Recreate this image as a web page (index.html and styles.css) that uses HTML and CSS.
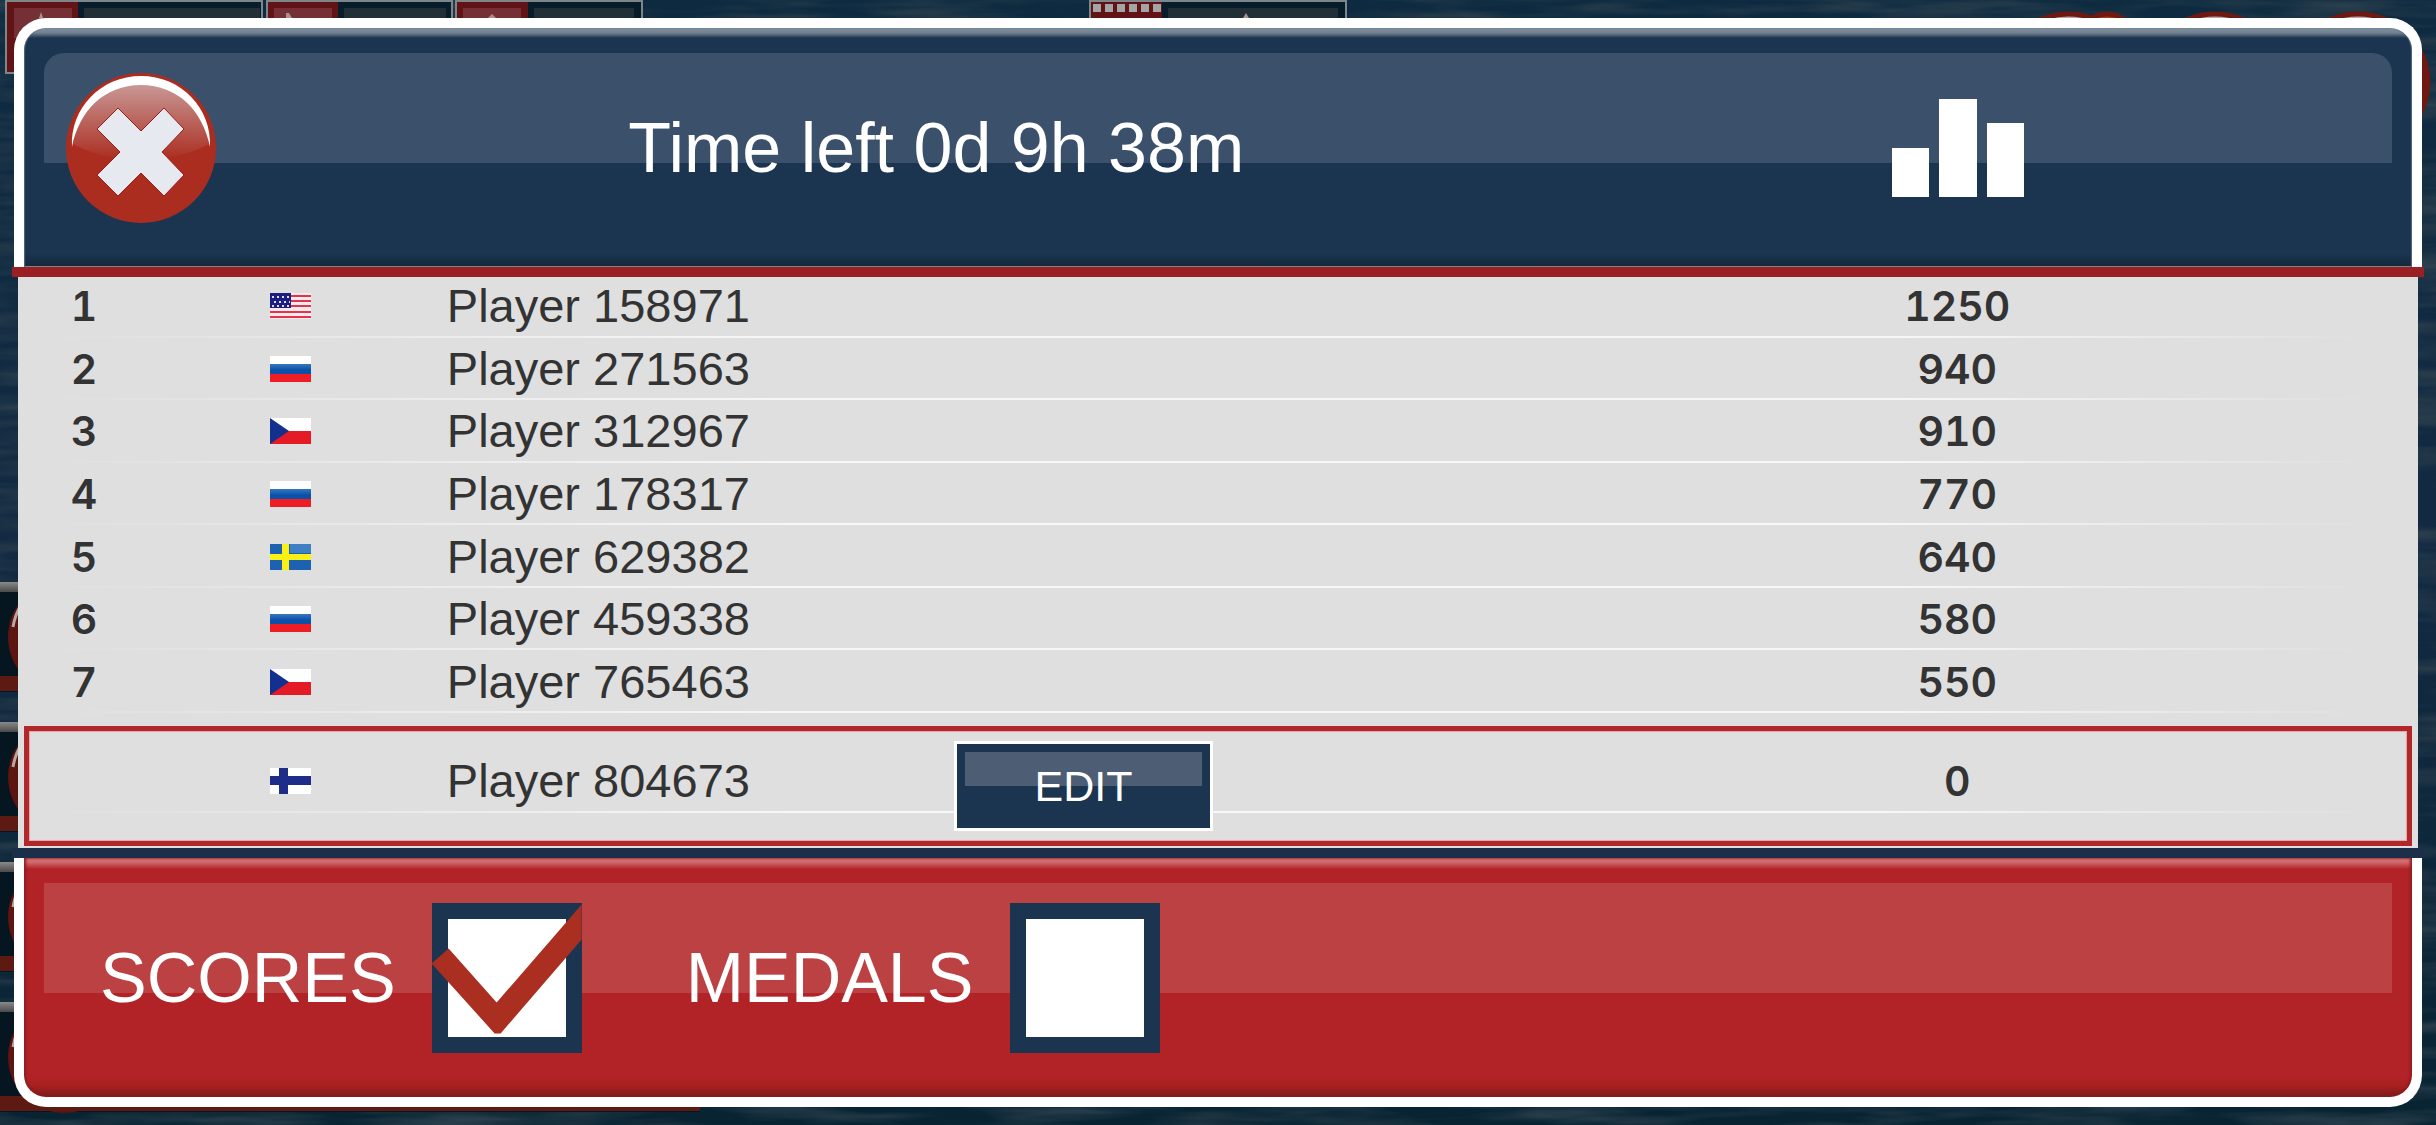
FILE: index.html
```html
<!doctype html>
<html lang="en">
    <head>
        <meta charset="utf-8">
        <meta name="viewport" content="width=device-width, initial-scale=1">
        <title>Leaderboard</title>
        <link rel="stylesheet" href="styles.css">
    </head>
    <body>
        <!-- game screen behind the dialog -->
        <svg class="backdrop" viewBox="0 0 2436 1125" preserveAspectRatio="none" aria-hidden="true">
            <defs>
                <filter id="grain" x="0" y="0" width="100%" height="100%" color-interpolation-filters="sRGB">
                    <feTurbulence type="fractalNoise" baseFrequency="0.008 0.07" numOctaves="3" seed="4" />
                    <feColorMatrix values="0 0 0 0 0.17  0 0 0 0 0.25  0 0 0 0 0.3  2 0 0 0 -0.75" />
                </filter>
                <linearGradient id="sea" x2="0" y2="1">
                    <stop offset="0" stop-color="#0d2a40" />
                    <stop offset="0.5" stop-color="#122a42" />
                    <stop offset="1" stop-color="#082433" />
                </linearGradient>
                <linearGradient id="steel" x2="0" y2="1">
                    <stop offset="0" stop-color="#8a8a8a" />
                    <stop offset="1" stop-color="#4a4a4a" />
                </linearGradient>
                <g id="slot">
                    <path fill="#061620" d="M0 0h700v110H0z" />
                    <path fill="url(#steel)" d="M0 0h700v10H0z" />
                    <circle cx="64" cy="55" r="56" fill="#5c1510" />
                    <path d="M13 45q4-24 22-36" fill="none" stroke="#b9a5a2" stroke-width="3" />
                    <path fill="#5c1a12" d="M0 94h700v15H0z" />
                </g>
            </defs>
            <path fill="url(#sea)" d="M0 0h2436v1125H0z" />
            <path filter="url(#grain)" d="M0 0h2436v1125H0z" />
            <g stroke="#7d868b" stroke-width="2" fill="#081d2b">
                <path d="M6 1h256v72H6zM267 1h185v72H267zM456 1h186v72H456zM1090 1h256v72h-256z" />
            </g>
            <path fill="#621316" d="M7 2h71v70H7zM268 2h70v70h-70zM457 2h71v70h-71zM1091 2h71v70h-71z" />
            <path fill="#743034" d="M14 8h58v30H14zM274 8h58v30h-58zM463 8h58v30h-58z" />
            <path fill="#222f37" d="M84 8h176v30H84zM344 8h102v30H344zM534 8h100v30H534zM1168 8h170v30h-170z" />
            <path stroke="#a5a5a5" stroke-width="8" stroke-dasharray="8 4" d="M1093 8h70" />
            <path fill="#a79090" d="M39 18l2-6 2 6zM286 18v-5h3l3 5zM488 18l4-4 4 4zM1243 18l3-5 3 5z" />
            <g fill="#b8a5a2" stroke="#6e1a12" stroke-width="5">
                <circle cx="2068" cy="82" r="68" />
                <circle cx="2215" cy="82" r="68" />
                <circle cx="2358" cy="82" r="68" />
                <circle cx="2107" cy="42" r="28" fill="#a8391a" />
            </g>
            <path fill="#6e1a12" d="M2390 18a71 71 0 0 1 0 128z" />
            <use href="#slot" y="582" />
            <use href="#slot" y="722" />
            <use href="#slot" y="862" />
            <use href="#slot" y="1002" />
        </svg>

        <!-- flag artwork -->
        <svg class="sprites" aria-hidden="true">
            <defs>
                <linearGradient id="blue" x2="0" y2="1">
                    <stop offset="0" stop-color="#3778bd" />
                    <stop offset="0.6" stop-color="#0b51a8" />
                </linearGradient>
            </defs>
            <symbol id="flag-us" viewBox="0 0 41 26">
                <path fill="#f7e9ec" d="M0 0h41v26H0z" />
                <path stroke="#e0354c" stroke-width="2" d="M0 3h41M0 8h41M0 13h41M0 19h41M0 24h41" />
                <path fill="#1d1d84" d="M0 0h21v15H0z" />
                <path stroke="#dcdcf4" stroke-width="2" stroke-dasharray="2 3" d="M2 4h18M4 9h16M2 13h18" />
            </symbol>
            <symbol id="flag-ru" viewBox="0 0 41 26">
                <path fill="#fff" d="M0 0h41v8H0z" />
                <path fill="url(#blue)" d="M0 8h41v10H0z" />
                <path fill="#ee1c25" d="M0 18h41v8H0z" />
            </symbol>
            <symbol id="flag-cz" viewBox="0 0 41 26">
                <path fill="#fff" d="M0 0h41v13H0z" />
                <path fill="#e41b25" d="M0 13h41v13H0z" />
                <path fill="#14308f" d="M0 0l19 13L0 26z" />
            </symbol>
            <symbol id="flag-se" viewBox="0 0 41 26">
                <path fill="#1c62b0" d="M0 0h41v26H0z" />
                <path fill="#3f80c4" d="M20 0h21v9H20z" />
                <path fill="#fbf015" d="M0 10h41v6H0zM12 0h7v26h-7z" />
            </symbol>
            <symbol id="flag-fi" viewBox="0 0 41 26">
                <path fill="#fff" d="M0 0h41v26H0z" />
                <path fill="#1d2d88" d="M0 8h41v9H0zM9 0h9v26H9z" />
            </symbol>
        </svg>

        <main>
            <header class="panel top">
                <button type="button" class="close" aria-label="Close">
                    <svg viewBox="0 0 150 150" aria-hidden="true">
                        <defs>
                            <linearGradient id="shine" x2="0" y2="1">
                                <stop offset="0" stop-color="#c99a98" />
                                <stop offset="1" stop-color="#ab2d20" />
                            </linearGradient>
                        </defs>
                        <circle cx="75" cy="75" r="75" fill="#ab2d20" />
                        <path fill="url(#shine)" d="M7 71C10 35 38 10 75 10s65 25 68 61q-30 16-68 16T7 71z" />
                        <path fill="#fff" d="M6 74C4 35 35 3 75 3s71 32 69 71C137 38 112 12 75 12S13 38 6 74z" />
                        <path fill="#e7e9f1" stroke="#9d1c18" stroke-width="1" d="M52 35L31 56l23 23-23 23 21 21 23-23 23 23 20-21-22-23 22-23-20-21-23 23z" />
                    </svg>
                </button>
                <h1>Time left 0d 9h 38m</h1>
                <svg class="chart" viewBox="0 0 132 98" role="img" aria-label="Score">
                    <path fill="#fff" d="M0 49h37v49H0zM47 0h38v98H47zM95 24h37v74H95z" />
                </svg>
            </header>
            <div class="bar red"></div>

            <section class="board">
                <table>
                    <tbody>
                        <tr>
                            <td class="rank">1</td>
                            <td class="country"><svg class="flag" role="img" aria-label="USA"><use href="#flag-us" /></svg></td>
                            <td class="name">Player 158971</td>
                            <td class="score">1250</td>
                        </tr>
                        <tr>
                            <td class="rank">2</td>
                            <td class="country"><svg class="flag" role="img" aria-label="Russia"><use href="#flag-ru" /></svg></td>
                            <td class="name">Player 271563</td>
                            <td class="score">940</td>
                        </tr>
                        <tr>
                            <td class="rank">3</td>
                            <td class="country"><svg class="flag" role="img" aria-label="Czechia"><use href="#flag-cz" /></svg></td>
                            <td class="name">Player 312967</td>
                            <td class="score">910</td>
                        </tr>
                        <tr>
                            <td class="rank">4</td>
                            <td class="country"><svg class="flag" role="img" aria-label="Russia"><use href="#flag-ru" /></svg></td>
                            <td class="name">Player 178317</td>
                            <td class="score">770</td>
                        </tr>
                        <tr>
                            <td class="rank">5</td>
                            <td class="country"><svg class="flag" role="img" aria-label="Sweden"><use href="#flag-se" /></svg></td>
                            <td class="name">Player 629382</td>
                            <td class="score">640</td>
                        </tr>
                        <tr>
                            <td class="rank">6</td>
                            <td class="country"><svg class="flag" role="img" aria-label="Russia"><use href="#flag-ru" /></svg></td>
                            <td class="name">Player 459338</td>
                            <td class="score">580</td>
                        </tr>
                        <tr>
                            <td class="rank">7</td>
                            <td class="country"><svg class="flag" role="img" aria-label="Czechia"><use href="#flag-cz" /></svg></td>
                            <td class="name">Player 765463</td>
                            <td class="score">550</td>
                        </tr>
                    </tbody>
                </table>
                <div class="own">
                    <span class="rank"></span>
                    <span class="country"><svg class="flag" role="img" aria-label="Finland"><use href="#flag-fi" /></svg></span>
                    <span class="name">Player 804673</span>
                    <div><button type="button" class="edit"><span>EDIT</span></button></div>
                    <span class="score">0</span>
                </div>
            </section>

            <div class="bar navy"></div>
            <footer class="panel bottom">
                <label for="scores">SCORES <input type="checkbox" id="scores" checked /></label>
                <label for="medals">MEDALS <input type="checkbox" id="medals" /></label>
            </footer>
        </main>
    </body>
</html>
```

FILE: styles.css
```css
* {
    margin: 0;
    padding: 0;
    box-sizing: border-box;
}

body {
    background: #0d2638;
    color: #333;
    font-family: "Liberation Sans", Arial, sans-serif;
    min-height: 100vh;
    position: relative;
}

.backdrop {
    position: absolute;
    top: 0;
    left: 0;
    width: 100%;
    height: 100%;
}

.sprites {
    position: absolute;
    width: 0;
    height: 0;
}

main {
    position: relative;
    padding: 18px 12px;
}

.panel {
    position: relative;
    margin: 0 2px;
    border: 10px solid #fff;
    color: #fff;
    min-height: 249px;
    align-items: center;
}

/* glossy strip */
.panel::before {
    content: "";
    position: absolute;
    top: 25px;
    left: 20px;
    right: 20px;
    height: 110px;
    background: #3b516b;
}

.panel > * {
    position: relative;
}

.top {
    display: grid;
    grid-template-columns: 344px minmax(0, 1fr) 38%;
    border-bottom: 0;
    border-radius: 32px 32px 0 0;
    background: linear-gradient(#8090a0, #71808f 5px, #1b3551 10px, #1b3551 225px, #132a3c 238px, #888c96 238px);
    box-shadow: inset 1px 0 1px #56697f, inset -1px 0 1px #56697f;
}

.top::before {
    border-radius: 20px 20px 0 0;
}

.bottom {
    display: flex;
    gap: 104px;
    padding-left: 76px;
    border-top: 0;
    border-radius: 0 0 32px 32px;
    background: linear-gradient(#dc8589, #cd6266 5px, #b22328 11px, #b22328 218px, #a8201f 228px, #7f1b1c 238px);
    box-shadow: inset 2px 0 3px #8f1c20, inset -2px 0 3px #8f1c20;
}

.bottom::before {
    background: #bc4143;
}

h1 {
    font-size: 70px;
    font-weight: 400;
    text-align: center;
}

.close {
    width: 150px;
    height: 150px;
    margin-left: 42px;
    border: 0;
    border-radius: 50%;
    background: none;
    cursor: pointer;
}

.close svg {
    display: block;
}

.chart {
    width: 132px;
    height: 98px;
    justify-self: center;
}

.bar {
    position: relative;
    height: 10px;
}

.red {
    background: #9b2024;
}

.navy {
    background: #1b2f4b;
}

.board {
    margin: 0 6px;
    background: #dfdfdf;
}

table {
    width: 100%;
    height: 438px;
    margin-top: -2px;
    border-collapse: collapse;
    table-layout: fixed;
}

tr,
.own {
    background: linear-gradient(90deg, transparent 1%, #f7f7f7 32%, #f7f7f7 78%, transparent 98%) no-repeat 0 100% / 100% 2px;
}

.rank {
    width: 5.5%;
}

.country {
    width: 11.7%;
    text-align: center;
}

.name {
    padding-left: 16px;
    font-size: 47px;
    line-height: 54px;
    white-space: nowrap;
}

.score {
    width: 38.4%;
}

.rank,
.score {
    font-family: Inter, "DejaVu Sans", sans-serif;
    font-size: 41px;
    font-weight: 600;
    font-variant-numeric: tabular-nums;
    line-height: 54px;
    text-align: center;
}

.flag {
    width: 41px;
    height: 26px;
    display: block;
    margin: 0 auto;
}

.own {
    position: relative;
    display: grid;
    grid-template-columns: 5.5% 11.7% 21.8% minmax(0, 1fr) 38.4%;
    align-items: center;
    padding: 28px 0 17px;
    background-position: 0 98px;
}

.own::before {
    content: "";
    position: absolute;
    top: 13px;
    right: 6px;
    bottom: 2px;
    left: 6px;
    border: 5px solid #b0282c;
    box-shadow: inset 0 0 1px 1px #e5a5a5;
}

.own span {
    position: relative;
    width: auto;
}

.own > span {
    padding-bottom: 10px;
}

.edit {
    position: relative;
    display: block;
    width: 259px;
    height: 90px;
    border: 3px solid #fff;
    background: #1b3551;
    color: #fff;
    font-family: inherit;
    font-size: 43px;
    cursor: pointer;
}

.edit::before {
    content: "";
    position: absolute;
    top: 8px;
    left: 8px;
    right: 8px;
    height: 34px;
    background: #4d5d73;
}

label {
    display: flex;
    align-items: center;
    gap: 36px;
    font-size: 70px;
}

input {
    position: relative;
    appearance: none;
    width: 150px;
    height: 150px;
    border: 16px solid #1b3551;
    background: #fff;
}

input:checked::before {
    content: "";
    position: absolute;
    inset: -16px;
    background: #ab2f20;
    clip-path: polygon(150px 2px, 65px 100px, 17px 46px, 0 61px, 63px 131px, 69px 131px, 150px 37px);
}
```
